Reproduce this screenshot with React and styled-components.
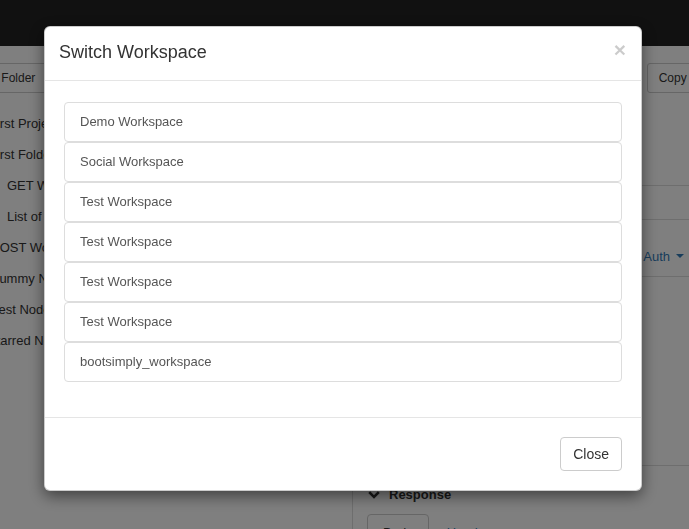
import styled, { createGlobalStyle } from 'styled-components'

const GlobalStyle = createGlobalStyle`
  html, body {
    margin: 0;
    height: 100%;
    overflow: hidden;
  }
  body {
    font-family: "Liberation Sans", Arial, sans-serif;
    font-size: 13px;
    color: #333;
    background: #fff;
  }
  * {
    box-sizing: border-box;
  }
`

const Page = styled.div`
  width: 689px;
  height: 529px;
  overflow: hidden;
  display: flex;
  flex-direction: column;
`

const Navbar = styled.div`
  flex: none;
  height: 46px;
  background: #222;
`

const Toolbar = styled.div`
  flex: none;
  display: flex;
  justify-content: space-between;
  padding-top: 17px;
  margin: 0 -35px 0 -38px;
`

const ToolButton = styled.button`
  height: 30px;
  width: ${props => props.$width || 'auto'};
  padding: 5px 11px;
  font: 12px/18px "Liberation Sans", Arial, sans-serif;
  color: #333;
  text-align: left;
  white-space: nowrap;
  background: #fff;
  border: 1px solid #ccc;
  border-radius: 3px;
`

const Workspace = styled.div`
  flex: 1;
  display: flex;
`

const Sidebar = styled.div`
  flex: none;
  width: 220px;
  margin-left: -20px;
  padding-top: 15px;
`

const TreeItem = styled.div`
  height: 31px;
  line-height: 31px;
  padding-left: ${props => props.$indent}px;
  white-space: nowrap;
  color: #333;
`

const Main = styled.div`
  flex: 1;
  display: flex;
  flex-direction: column;
  padding-top: 92px;
`

const UrlRow = styled.div`
  height: 35px;
  border-top: 1px solid #ddd;
  border-bottom: 1px solid #ddd;
`

const Tabs = styled.div`
  display: flex;
  justify-content: flex-end;
  height: 57px;
  padding-top: 16px;
  border-bottom: 1px solid #ddd;
  margin-right: -10px;
`

const TabLink = styled.a`
  display: flex;
  align-items: center;
  height: 40px;
  padding: 10px 15px;
  color: #337ab7;
  white-space: nowrap;
`

const Caret = styled.span`
  display: inline-block;
  width: 0;
  height: 0;
  margin-left: 6px;
  border-top: 4px solid #337ab7;
  border-left: 4px solid transparent;
  border-right: 4px solid transparent;
`

const TabContent = styled.div`
  height: 188px;
`

const Split = styled.div`
  flex: 1;
  display: flex;
  border-top: 1px solid #ddd;
`

const RequestColumn = styled.div`
  flex: none;
  width: 152px;
`

const ResponsePane = styled.div`
  flex: 1;
  border-left: 1px solid #ddd;
  padding: 20px 15px;
`

const PaneHeading = styled.div`
  display: flex;
  align-items: center;
  gap: 9px;
  font-weight: bold;
  line-height: 18px;
`

const PaneTabs = styled.div`
  display: flex;
  align-items: flex-start;
  gap: 18px;
  margin-top: 10px;
  margin-left: -1px;
`

const PaneButton = styled.button`
  height: 38px;
  padding: 9px 15px;
  font: 13px/18px "Liberation Sans", Arial, sans-serif;
  color: #333;
  background: #fff;
  border: 1px solid #ccc;
  border-radius: 4px;
`

const PaneLink = styled.a`
  padding-top: 10px;
  line-height: 18px;
  color: #337ab7;
`

const Backdrop = styled.div`
  position: fixed;
  inset: 0;
  background: rgba(0, 0, 0, 0.5);
`

const ModalLayer = styled.div`
  position: fixed;
  inset: 0;
`

const Dialog = styled.div`
  width: 598px;
  margin: 26px 0 0 44px;
  background: #fff;
  border: 1px solid rgba(0, 0, 0, 0.2);
  border-radius: 6px;
  box-shadow: 0 5px 15px rgba(0, 0, 0, 0.5);
`

const Header = styled.div`
  display: flex;
  justify-content: space-between;
  align-items: flex-start;
  padding: 12px 15px 15px 14px;
  border-bottom: 1px solid #e5e5e5;
`

const Title = styled.h4`
  margin: 0;
  font-size: 18px;
  line-height: 26px;
  font-weight: normal;
  color: #333;
`

const CloseX = styled.button`
  padding: 0;
  border: 0;
  background: none;
  font: bold 21px/21px "Liberation Sans", Arial, sans-serif;
  color: #000;
  opacity: 0.2;
`

const Body = styled.div`
  padding: 21px 19px 15px;
`

const List = styled.div`
  margin-bottom: 20px;
`

const ListItem = styled.a`
  display: block;
  padding: 10px 15px;
  line-height: 18px;
  color: #555;
  border: 1px solid #ddd;
  border-radius: 4px;
  background: #fff;
`

const Footer = styled.div`
  display: flex;
  justify-content: flex-end;
  padding: 19px;
  border-top: 1px solid #e5e5e5;
`

const FooterButton = styled.button`
  height: 34px;
  padding: 6px 12px;
  font: 14px/20px "Liberation Sans", Arial, sans-serif;
  color: #333;
  background: #fff;
  border: 1px solid #ccc;
  border-radius: 4px;
`

const tree = [
  { label: 'First Project', indent: 9 },
  { label: 'First Folder', indent: 9 },
  { label: 'GET Workspace', indent: 27 },
  { label: 'List of Nodes', indent: 27 },
  { label: 'POST Workspace', indent: 11 },
  { label: 'Dummy Node', indent: 10 },
  { label: 'Test Node', indent: 12 },
  { label: 'Starred Node', indent: 8 },
]

const workspaces = [
  'Demo Workspace',
  'Social Workspace',
  'Test Workspace',
  'Test Workspace',
  'Test Workspace',
  'Test Workspace',
  'bootsimply_workspace',
]

const App = () => {
  return (
    <>
      <GlobalStyle />
      <Page>
        <Navbar />
        <Toolbar>
          <ToolButton $width='100px'>New Folder</ToolButton>
          <ToolButton>Copy Link</ToolButton>
        </Toolbar>
        <Workspace>
          <Sidebar>
            {tree.map(item => (
              <TreeItem key={item.label} $indent={item.indent}>{item.label}</TreeItem>
            ))}
          </Sidebar>
          <Main>
            <UrlRow />
            <Tabs>
              <TabLink>No Auth<Caret /></TabLink>
            </Tabs>
            <TabContent />
            <Split>
              <RequestColumn />
              <ResponsePane>
                <PaneHeading>
                  <svg width='12' height='8' viewBox='0 0 12 8'>
                    <path d='M1.2 1.2 L6 6 L10.8 1.2' fill='none' stroke='#333' strokeWidth='2.6' />
                  </svg>
                  Response
                </PaneHeading>
                <PaneTabs>
                  <PaneButton>Body</PaneButton>
                  <PaneLink>Headers</PaneLink>
                </PaneTabs>
              </ResponsePane>
            </Split>
          </Main>
        </Workspace>
      </Page>
      <Backdrop />
      <ModalLayer>
        <Dialog>
          <Header>
            <Title>Switch Workspace</Title>
            <CloseX>×</CloseX>
          </Header>
          <Body>
            <List>
              {workspaces.map((name, i) => (
                <ListItem key={i}>{name}</ListItem>
              ))}
            </List>
          </Body>
          <Footer>
            <FooterButton>Close</FooterButton>
          </Footer>
        </Dialog>
      </ModalLayer>
    </>
  )
}

export default App
